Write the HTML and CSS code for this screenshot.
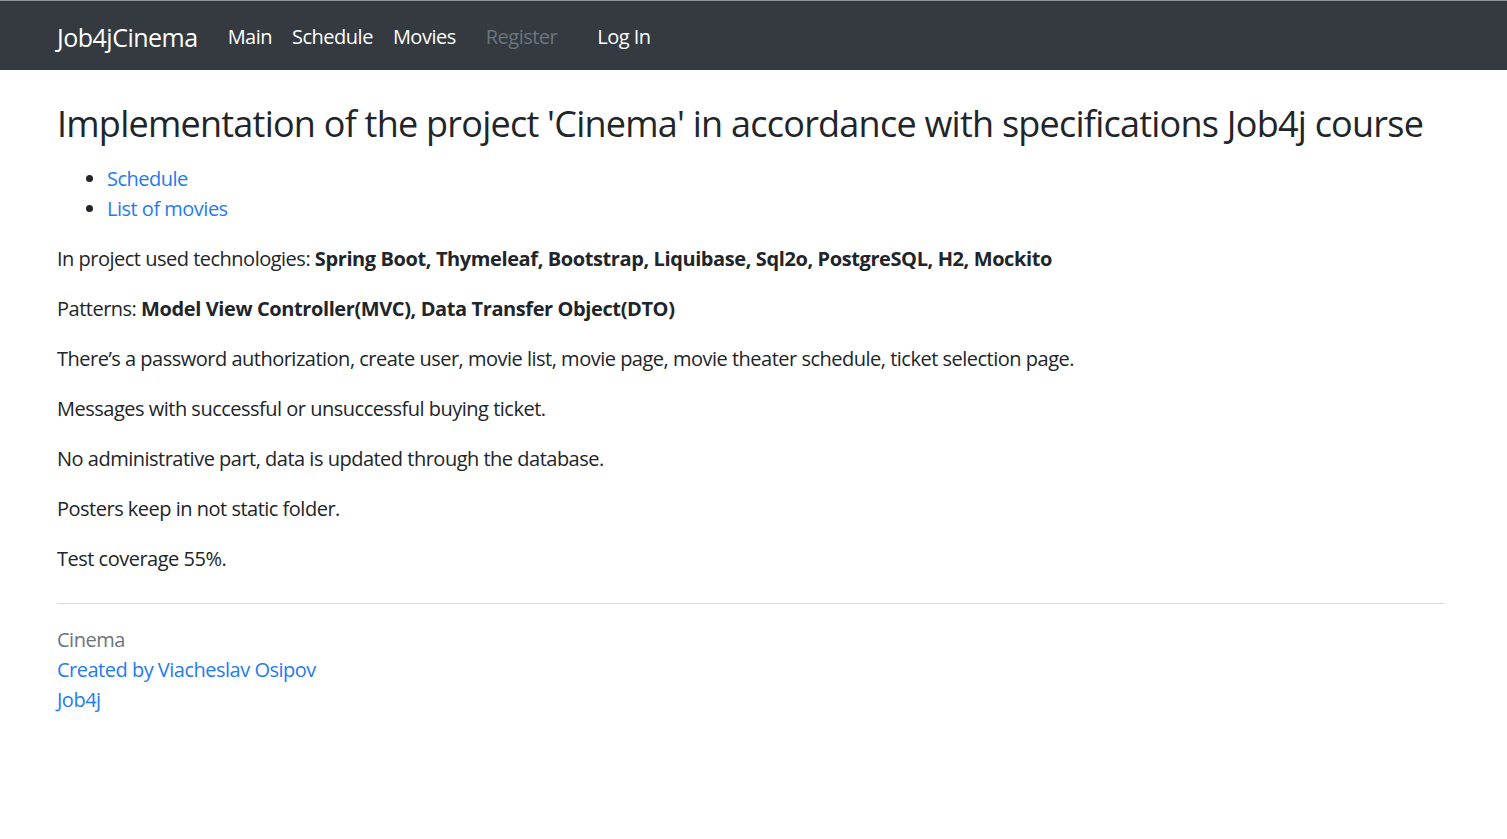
FILE: index.html
```html
<!DOCTYPE html>
<html lang="en">
<head>
<meta charset="utf-8">
<title>Cinema</title>
<link rel="stylesheet" href="styles.css">
</head>
<body>
<nav class="navbar">
  <div class="nav-inner">
    <a class="brand" href="#">Job4jCinema</a>
    <div class="nav-links">
      <a class="nav-link" href="#">Main</a>
      <a class="nav-link" href="#">Schedule</a>
      <a class="nav-link" href="#">Movies</a>
    </div>
    <div class="nav-auth">
      <a class="nav-link disabled" href="#">Register</a>
      <a class="nav-link" href="#">Log In</a>
    </div>
  </div>
</nav>
<main class="container">
  <h1 class="title">Implementation of the project 'Cinema' in accordance with specifications Job4j course</h1>
  <ul class="links">
    <li><a href="#">Schedule</a></li>
    <li><a href="#">List of movies</a></li>
  </ul>
  <p>In project used technologies: <b>Spring Boot, Thymeleaf, Bootstrap, Liquibase, Sql2o, PostgreSQL, H2, Mockito</b></p>
  <p>Patterns: <b>Model View Controller(MVC), Data Transfer Object(DTO)</b></p>
  <p>There’s a password authorization, create user, movie list, movie page, movie theater schedule, ticket selection page.</p>
  <p>Messages with successful or unsuccessful buying ticket.</p>
  <p>No administrative part, data is updated through the database.</p>
  <p>Posters keep in not static folder.</p>
  <p>Test coverage 55%.</p>
</main>
<footer class="container footer">
  <hr class="rule">
  <div class="muted">Cinema</div>
  <div><a href="#">Created by Viacheslav Osipov</a></div>
  <div><a href="#">Job4j</a></div>
</footer>
</body>
</html>
```
FILE: styles.css
```css
html, body {
  margin: 0;
  padding: 0;
}
body {
  font-family: "Open Sans", "Noto Sans", sans-serif;
  font-size: 20px;
  line-height: 30px;
  letter-spacing: -0.5px;
  color: #212529;
  background: #fff;
}
a {
  color: #1f7bf0;
  text-decoration: none;
}
.navbar {
  background: #343a40;
  border-top: 1px solid #8e9196;
  height: 69px;
}
.nav-inner {
  width: 1388px;
  margin-left: 57px;
  display: flex;
  align-items: center;
  height: 69px;
  padding-top: 2px;
  box-sizing: border-box;
}
.brand {
  color: #fff;
  font-size: 25px;
  line-height: 30px;
  margin-right: 20px;
}
.nav-links, .nav-auth {
  display: flex;
}
.nav-auth {
  gap: 20px;
  margin-left: 10px;
}
.nav-link {
  color: #fff;
  padding: 0 10px;
  line-height: 30px;
}
.nav-link.disabled {
  color: #6c757d;
}
.container {
  width: 1388px;
  margin-left: 57px;
}
.title {
  font-size: 36px;
  font-weight: 500;
  letter-spacing: -0.76px;
  line-height: 44px;
  margin: 32px 0 18px;
  white-space: nowrap;
}
.links {
  margin: 0 0 20px;
  padding-left: 50px;
}
p {
  margin: 0 0 20px;
}
b {
  font-weight: 700;
  letter-spacing: -0.4px;
}
.footer {
  padding-top: 9px;
}
.rule {
  border: 0;
  border-top: 1px solid #dcdcdc;
  margin: 0 0 21px;
}
.muted {
  color: #6c757d;
}
```
